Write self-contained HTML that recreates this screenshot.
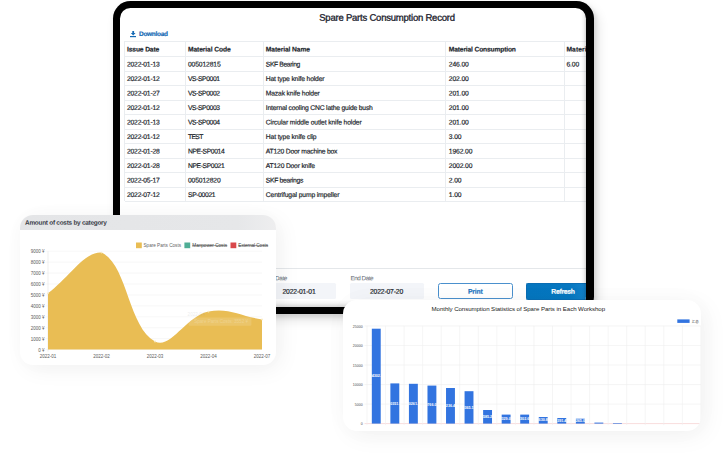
<!DOCTYPE html>
<html lang="en">
<head>
<meta charset="utf-8">
<title>Spare Parts Consumption Record</title>
<style>
html,body{margin:0;padding:0;}
body{width:723px;height:453px;background:#fff;position:relative;overflow:hidden;font-family:"Liberation Sans","Noto Sans CJK SC",sans-serif;color:#222;}
.abs{position:absolute;}
.t{position:absolute;white-space:nowrap;line-height:12px;height:12px;-webkit-text-stroke:0.18px currentColor;}
#tablet{left:112.5px;top:1.1px;width:481.5px;height:312.8px;background:#000;border-radius:17.5px;box-shadow:4px 6px 12px rgba(0,0,0,0.11), 2px 3px 5px rgba(0,0,0,0.11);}
#screen{left:7.3px;top:6.9px;width:466.7px;height:299px;background:#fff;border-radius:10.5px;overflow:hidden;}
#screen .inner{position:absolute;left:-119.8px;top:-8px;width:723px;height:453px;}
#sep{left:120px;top:268.4px;width:470px;height:0;border-top:0.7px solid #e4e7ea;}
.ns{-webkit-text-stroke:0 !important;}
.inp{height:16.5px;width:74px;background:#f3f5f9;border-radius:1.5px;}
.btn{height:14.6px;width:73.2px;border-radius:2px;}
#print{left:437.6px;top:282.9px;border:0.9px solid #4a90cd;border-radius:2.5px;background:#fff;}
#refresh{left:526px;top:283.1px;border:0.8px solid #0a6db3;background:linear-gradient(to right,#0576bf 0%,#0677c0 70%,#1483cc 100%);width:60px;border-right:0;border-radius:2px 0 0 2px;}
#rshade{left:580.5px;top:8px;width:6.5px;height:300px;background:linear-gradient(to right,rgba(0,0,0,0),rgba(0,0,0,0.05) 45%,rgba(0,0,0,0.22));}
#bshade{left:120px;top:300px;width:470px;height:7px;background:linear-gradient(to bottom,rgba(0,0,0,0),rgba(0,0,0,0.04) 45%,rgba(0,0,0,0.16));}
#lcard{left:20px;top:214.8px;width:256px;height:149.8px;background:#fff;border-radius:13px;box-shadow:5px 5px 22px rgba(0,0,0,0.05),0 0 26px rgba(0,0,0,0.015);overflow:hidden;}
#lcard .inner,#rcard .inner{position:absolute;width:723px;height:453px;}
#lcard .inner{left:-20px;top:-214.8px;}
#rcard .inner{left:-343px;top:-299.8px;}
#lhead{left:20px;top:214.8px;width:256px;height:15px;background:linear-gradient(to right,#e4e5e7 0%,#e6e7e9 85%,#eeeeef 100%);}
#rcard{left:343px;top:299.8px;width:358px;height:130.8px;background:#fff;border-radius:14px;box-shadow:5px 5px 24px rgba(0,0,0,0.05),0 0 30px rgba(0,0,0,0.02);overflow:hidden;}
svg{position:absolute;left:0;top:0;}
svg text{font-family:"Liberation Sans","Noto Sans CJK SC",sans-serif;}
.ax{font-size:4.5px;fill:#5a5a5a;}
.lg{font-size:4.7px;fill:#666;}
.lgs{fill:#444;}
.tt{font-size:4.6px;fill:#fff;}
.bx{font-size:3.5px;fill:#4a4a4a;}
.bl{font-size:3.7px;fill:#fff;font-weight:bold;}
.bt{font-size:6.1px;fill:#222;}
</style>
</head>
<body>
<div id="tablet" class="abs">
  <div id="screen" class="abs"><div class="inner">
    <svg class="abs" style="left:130.1px;top:31.3px" width="6.4" height="6.3" viewBox="0 0 64 61"><path d="M23 0h18v20h15L32 44 8 20h15z" fill="#176bb5"/><rect x="0" y="49" width="64" height="12" fill="#176bb5"/></svg>
<div class="abs" style="left:124.5px;top:41.15px;width:480px;height:0;border-top:0.7px solid #eaedf0"></div>
<div class="abs" style="left:124.5px;top:56.15px;width:480px;height:0;border-top:0.7px solid #eaedf0"></div>
<div class="abs" style="left:124.5px;top:70.65px;width:480px;height:0;border-top:0.7px solid #eaedf0"></div>
<div class="abs" style="left:124.5px;top:85.15px;width:480px;height:0;border-top:0.7px solid #eaedf0"></div>
<div class="abs" style="left:124.5px;top:99.65px;width:480px;height:0;border-top:0.7px solid #eaedf0"></div>
<div class="abs" style="left:124.5px;top:114.15px;width:480px;height:0;border-top:0.7px solid #eaedf0"></div>
<div class="abs" style="left:124.5px;top:128.65px;width:480px;height:0;border-top:0.7px solid #eaedf0"></div>
<div class="abs" style="left:124.5px;top:143.15px;width:480px;height:0;border-top:0.7px solid #eaedf0"></div>
<div class="abs" style="left:124.5px;top:157.65px;width:480px;height:0;border-top:0.7px solid #eaedf0"></div>
<div class="abs" style="left:124.5px;top:172.15px;width:480px;height:0;border-top:0.7px solid #eaedf0"></div>
<div class="abs" style="left:124.5px;top:186.65px;width:480px;height:0;border-top:0.7px solid #eaedf0"></div>
<div class="abs" style="left:124.5px;top:201.15px;width:480px;height:0;border-top:0.7px solid #eaedf0"></div>
<div class="abs" style="left:124.35px;top:41.5px;width:0;height:160.00px;border-left:0.7px solid #eaedf0"></div>
<div class="abs" style="left:185.25px;top:41.5px;width:0;height:160.00px;border-left:0.7px solid #eaedf0"></div>
<div class="abs" style="left:263.15px;top:41.5px;width:0;height:160.00px;border-left:0.7px solid #eaedf0"></div>
<div class="abs" style="left:445.25px;top:41.5px;width:0;height:160.00px;border-left:0.7px solid #eaedf0"></div>
<div class="abs" style="left:563.55px;top:41.5px;width:0;height:160.00px;border-left:0.7px solid #eaedf0"></div>
    <div id="sep" class="abs"></div>
    <div class="abs inp" style="left:262px;top:283px"></div>
    <div class="abs inp" style="left:349.5px;top:283px"></div>
    <div id="print" class="abs btn"></div>
    <div id="refresh" class="abs btn"></div>
<span class="t" style="left:319px;top:11px;transform:translate(0.20px,0.70px) rotate(0.03deg);font-size:9.5px;font-weight:normal;color:#1a202b;letter-spacing:-0.215px;-webkit-text-stroke-width:0.3px">Spare Parts Consumption Record</span>
<span class="t" style="left:139px;top:28px;transform:translate(0.00px,0.05px) rotate(0.03deg);font-size:6.5px;font-weight:bold;color:#176bb5;letter-spacing:-0.283px">Download</span>
<span class="t" style="left:127px;top:43px;transform:translate(0.00px,0.55px) rotate(0.03deg);font-size:6.7px;font-weight:bold;color:#20242a;letter-spacing:-0.137px">Issue Date</span>
<span class="t" style="left:188px;top:43px;transform:translate(0.00px,0.55px) rotate(0.03deg);font-size:6.7px;font-weight:bold;color:#20242a;letter-spacing:-0.097px">Material Code</span>
<span class="t" style="left:265px;top:43px;transform:translate(0.80px,0.55px) rotate(0.03deg);font-size:6.7px;font-weight:bold;color:#20242a;letter-spacing:-0.097px">Material Name</span>
<span class="t" style="left:448px;top:43px;transform:translate(0.80px,0.55px) rotate(0.03deg);font-size:6.7px;font-weight:bold;color:#20242a;letter-spacing:-0.162px">Material Consumption</span>
<span class="t" style="left:566px;top:43px;transform:translate(0.40px,0.55px) rotate(0.03deg);font-size:6.7px;font-weight:bold;color:#20242a;letter-spacing:0.105px">Material Unit</span>
<span class="t" style="left:127px;top:58px;transform:translate(0.00px,0.45px) rotate(0.03deg);font-size:6.75px;font-weight:normal;color:#20242a;letter-spacing:-0.193px">2022-01-13</span>
<span class="t" style="left:188px;top:58px;transform:translate(0.00px,0.45px) rotate(0.03deg);font-size:6.75px;font-weight:normal;color:#20242a;letter-spacing:-0.144px">005012815</span>
<span class="t" style="left:265px;top:58px;transform:translate(0.80px,0.45px) rotate(0.03deg);font-size:6.75px;font-weight:normal;color:#20242a;letter-spacing:-0.380px">SKF Bearing</span>
<span class="t" style="left:448px;top:58px;transform:translate(0.80px,0.45px) rotate(0.03deg);font-size:6.75px;font-weight:normal;color:#20242a;letter-spacing:-0.126px">246.00</span>
<span class="t" style="left:566px;top:58px;transform:translate(0.40px,0.45px) rotate(0.03deg);font-size:6.75px;font-weight:normal;color:#20242a;letter-spacing:-0.135px">6.00</span>
<span class="t" style="left:127px;top:72px;transform:translate(0.00px,0.95px) rotate(0.03deg);font-size:6.75px;font-weight:normal;color:#20242a;letter-spacing:-0.193px">2022-01-12</span>
<span class="t" style="left:188px;top:72px;transform:translate(0.00px,0.95px) rotate(0.03deg);font-size:6.75px;font-weight:normal;color:#20242a;letter-spacing:-0.409px">VS-SP0001</span>
<span class="t" style="left:265px;top:72px;transform:translate(0.80px,0.95px) rotate(0.03deg);font-size:6.75px;font-weight:normal;color:#20242a;letter-spacing:-0.158px">Hat type knife holder</span>
<span class="t" style="left:448px;top:72px;transform:translate(0.80px,0.95px) rotate(0.03deg);font-size:6.75px;font-weight:normal;color:#20242a;letter-spacing:-0.126px">202.00</span>
<span class="t" style="left:127px;top:87px;transform:translate(0.00px,0.45px) rotate(0.03deg);font-size:6.75px;font-weight:normal;color:#20242a;letter-spacing:-0.193px">2022-01-27</span>
<span class="t" style="left:188px;top:87px;transform:translate(0.00px,0.45px) rotate(0.03deg);font-size:6.75px;font-weight:normal;color:#20242a;letter-spacing:-0.409px">VS-SP0002</span>
<span class="t" style="left:265px;top:87px;transform:translate(0.80px,0.45px) rotate(0.03deg);font-size:6.75px;font-weight:normal;color:#20242a;letter-spacing:-0.159px">Mazak knife holder</span>
<span class="t" style="left:448px;top:87px;transform:translate(0.80px,0.45px) rotate(0.03deg);font-size:6.75px;font-weight:normal;color:#20242a;letter-spacing:-0.126px">201.00</span>
<span class="t" style="left:127px;top:101px;transform:translate(0.00px,0.95px) rotate(0.03deg);font-size:6.75px;font-weight:normal;color:#20242a;letter-spacing:-0.193px">2022-01-12</span>
<span class="t" style="left:188px;top:101px;transform:translate(0.00px,0.95px) rotate(0.03deg);font-size:6.75px;font-weight:normal;color:#20242a;letter-spacing:-0.409px">VS-SP0003</span>
<span class="t" style="left:265px;top:101px;transform:translate(0.80px,0.95px) rotate(0.03deg);font-size:6.75px;font-weight:normal;color:#20242a;letter-spacing:-0.184px">Internal cooling CNC lathe guide bush</span>
<span class="t" style="left:448px;top:101px;transform:translate(0.80px,0.95px) rotate(0.03deg);font-size:6.75px;font-weight:normal;color:#20242a;letter-spacing:-0.126px">201.00</span>
<span class="t" style="left:127px;top:116px;transform:translate(0.00px,0.45px) rotate(0.03deg);font-size:6.75px;font-weight:normal;color:#20242a;letter-spacing:-0.193px">2022-01-13</span>
<span class="t" style="left:188px;top:116px;transform:translate(0.00px,0.45px) rotate(0.03deg);font-size:6.75px;font-weight:normal;color:#20242a;letter-spacing:-0.409px">VS-SP0004</span>
<span class="t" style="left:265px;top:116px;transform:translate(0.80px,0.45px) rotate(0.03deg);font-size:6.75px;font-weight:normal;color:#20242a;letter-spacing:-0.125px">Circular middle outlet knife holder</span>
<span class="t" style="left:448px;top:116px;transform:translate(0.80px,0.45px) rotate(0.03deg);font-size:6.75px;font-weight:normal;color:#20242a;letter-spacing:-0.126px">201.00</span>
<span class="t" style="left:127px;top:130px;transform:translate(0.00px,0.95px) rotate(0.03deg);font-size:6.75px;font-weight:normal;color:#20242a;letter-spacing:-0.193px">2022-01-12</span>
<span class="t" style="left:188px;top:130px;transform:translate(0.00px,0.95px) rotate(0.03deg);font-size:6.75px;font-weight:normal;color:#20242a;letter-spacing:-0.666px">TEST</span>
<span class="t" style="left:265px;top:130px;transform:translate(0.80px,0.95px) rotate(0.03deg);font-size:6.75px;font-weight:normal;color:#20242a;letter-spacing:-0.136px">Hat type knife clip</span>
<span class="t" style="left:448px;top:130px;transform:translate(0.80px,0.95px) rotate(0.03deg);font-size:6.75px;font-weight:normal;color:#20242a;letter-spacing:-0.135px">3.00</span>
<span class="t" style="left:127px;top:145px;transform:translate(0.00px,0.45px) rotate(0.03deg);font-size:6.75px;font-weight:normal;color:#20242a;letter-spacing:-0.193px">2022-01-28</span>
<span class="t" style="left:188px;top:145px;transform:translate(0.00px,0.45px) rotate(0.03deg);font-size:6.75px;font-weight:normal;color:#20242a;letter-spacing:-0.386px">NPE-SP0014</span>
<span class="t" style="left:265px;top:145px;transform:translate(0.80px,0.45px) rotate(0.03deg);font-size:6.75px;font-weight:normal;color:#20242a;letter-spacing:-0.207px">AT120 Door machine box</span>
<span class="t" style="left:448px;top:145px;transform:translate(0.80px,0.45px) rotate(0.03deg);font-size:6.75px;font-weight:normal;color:#20242a;letter-spacing:-0.129px">1962.00</span>
<span class="t" style="left:127px;top:159px;transform:translate(0.00px,0.95px) rotate(0.03deg);font-size:6.75px;font-weight:normal;color:#20242a;letter-spacing:-0.193px">2022-01-28</span>
<span class="t" style="left:188px;top:159px;transform:translate(0.00px,0.95px) rotate(0.03deg);font-size:6.75px;font-weight:normal;color:#20242a;letter-spacing:-0.386px">NPE-SP0021</span>
<span class="t" style="left:265px;top:159px;transform:translate(0.80px,0.95px) rotate(0.03deg);font-size:6.75px;font-weight:normal;color:#20242a;letter-spacing:-0.196px">AT120 Door knife</span>
<span class="t" style="left:448px;top:159px;transform:translate(0.80px,0.95px) rotate(0.03deg);font-size:6.75px;font-weight:normal;color:#20242a;letter-spacing:-0.129px">2002.00</span>
<span class="t" style="left:127px;top:174px;transform:translate(0.00px,0.45px) rotate(0.03deg);font-size:6.75px;font-weight:normal;color:#20242a;letter-spacing:-0.193px">2022-05-17</span>
<span class="t" style="left:188px;top:174px;transform:translate(0.00px,0.45px) rotate(0.03deg);font-size:6.75px;font-weight:normal;color:#20242a;letter-spacing:-0.144px">005012820</span>
<span class="t" style="left:265px;top:174px;transform:translate(0.80px,0.45px) rotate(0.03deg);font-size:6.75px;font-weight:normal;color:#20242a;letter-spacing:-0.309px">SKF bearings</span>
<span class="t" style="left:448px;top:174px;transform:translate(0.80px,0.45px) rotate(0.03deg);font-size:6.75px;font-weight:normal;color:#20242a;letter-spacing:-0.135px">2.00</span>
<span class="t" style="left:127px;top:188px;transform:translate(0.00px,0.95px) rotate(0.03deg);font-size:6.75px;font-weight:normal;color:#20242a;letter-spacing:-0.193px">2022-07-12</span>
<span class="t" style="left:188px;top:188px;transform:translate(0.00px,0.95px) rotate(0.03deg);font-size:6.75px;font-weight:normal;color:#20242a;letter-spacing:-0.354px">SP-00021</span>
<span class="t" style="left:265px;top:188px;transform:translate(0.80px,0.95px) rotate(0.03deg);font-size:6.75px;font-weight:normal;color:#20242a;letter-spacing:-0.137px">Centrifugal pump impeller</span>
<span class="t" style="left:448px;top:188px;transform:translate(0.80px,0.95px) rotate(0.03deg);font-size:6.75px;font-weight:normal;color:#20242a;letter-spacing:-0.135px">1.00</span>
<span class="t" style="left:261px;top:272px;transform:translate(0.60px,0.25px) rotate(0.03deg);font-size:6.3px;font-weight:normal;color:#6c727a;letter-spacing:-0.286px;-webkit-text-stroke-width:0.05px">Start Date</span>
<span class="t" style="left:350px;top:272px;transform:translate(0.50px,0.25px) rotate(0.03deg);font-size:6.3px;font-weight:normal;color:#6c727a;letter-spacing:-0.458px;-webkit-text-stroke-width:0.05px">End Date</span>
<span class="t" style="left:282px;top:285px;transform:translate(0.50px,0.85px) rotate(0.03deg);font-size:6.8px;font-weight:normal;color:#20242a;letter-spacing:-0.178px">2022-01-01</span>
<span class="t" style="left:370px;top:285px;transform:translate(0.00px,0.85px) rotate(0.03deg);font-size:6.8px;font-weight:normal;color:#20242a;letter-spacing:-0.178px">2022-07-20</span>
<span class="t" style="left:467px;top:285px;transform:translate(0.90px,0.65px) rotate(0.03deg);font-size:6.8px;font-weight:bold;color:#1b73c1;letter-spacing:-0.177px">Print</span>
<span class="t" style="left:551px;top:285px;transform:translate(0.25px,0.65px) rotate(0.03deg);font-size:6.8px;font-weight:bold;color:#ffffff;letter-spacing:-0.259px">Refresh</span>
    <div id="bshade" class="abs"></div>
    <div id="rshade" class="abs"></div>
  </div></div>
</div>
<div id="lcard" class="abs"><div class="inner">
  <div id="lhead" class="abs"></div>
  <span class="t ns" style="left:25px;top:216px;transform:translate(0.00px,0.75px) rotate(0.03deg);font-size:6.45px;font-weight:bold;color:#3a4049;letter-spacing:-0.260px">Amount of costs by category</span>
  <svg width="723" height="453" viewBox="0 0 723 453">
<line x1="45.5" y1="349.60" x2="262.0" y2="349.60" stroke="#f2f2f2" stroke-width="0.6"/>
<text x="44.6" y="351.60" text-anchor="end" class="ax">0 ¥</text>
<line x1="45.5" y1="338.67" x2="262.0" y2="338.67" stroke="#f2f2f2" stroke-width="0.6"/>
<text x="44.6" y="340.67" text-anchor="end" class="ax">1000 ¥</text>
<line x1="45.5" y1="327.74" x2="262.0" y2="327.74" stroke="#f2f2f2" stroke-width="0.6"/>
<text x="44.6" y="329.74" text-anchor="end" class="ax">2000 ¥</text>
<line x1="45.5" y1="316.81" x2="262.0" y2="316.81" stroke="#f2f2f2" stroke-width="0.6"/>
<text x="44.6" y="318.81" text-anchor="end" class="ax">3000 ¥</text>
<line x1="45.5" y1="305.88" x2="262.0" y2="305.88" stroke="#f2f2f2" stroke-width="0.6"/>
<text x="44.6" y="307.88" text-anchor="end" class="ax">4000 ¥</text>
<line x1="45.5" y1="294.95" x2="262.0" y2="294.95" stroke="#f2f2f2" stroke-width="0.6"/>
<text x="44.6" y="296.95" text-anchor="end" class="ax">5000 ¥</text>
<line x1="45.5" y1="284.02" x2="262.0" y2="284.02" stroke="#f2f2f2" stroke-width="0.6"/>
<text x="44.6" y="286.02" text-anchor="end" class="ax">6000 ¥</text>
<line x1="45.5" y1="273.09" x2="262.0" y2="273.09" stroke="#f2f2f2" stroke-width="0.6"/>
<text x="44.6" y="275.09" text-anchor="end" class="ax">7000 ¥</text>
<line x1="45.5" y1="262.16" x2="262.0" y2="262.16" stroke="#f2f2f2" stroke-width="0.6"/>
<text x="44.6" y="264.16" text-anchor="end" class="ax">8000 ¥</text>
<line x1="45.5" y1="251.23" x2="262.0" y2="251.23" stroke="#f2f2f2" stroke-width="0.6"/>
<text x="44.6" y="253.23" text-anchor="end" class="ax">9000 ¥</text>
<line x1="48" y1="251.23" x2="48" y2="351.60" stroke="#e4e4e4" stroke-width="0.6"/>
<path d="M48.00,293.31 C69.40,277.00 84.67,251.23 101.50,252.54 C127.47,264.24 128.09,326.67 155.00,341.51 C170.89,349.60 185.76,316.26 208.50,311.56 C228.56,307.42 240.60,316.29 262.00,319.43 L262.00,349.60 L48.00,349.60 Z" fill="#e9bd54"/>
<circle cx="48.00" cy="293.31" r="0.9" fill="#f8e9c0"/>
<circle cx="101.50" cy="252.54" r="0.9" fill="#f8e9c0"/>
<circle cx="155.00" cy="341.51" r="0.9" fill="#f8e9c0"/>
<circle cx="208.50" cy="311.56" r="0.9" fill="#f8e9c0"/>
<circle cx="262.00" cy="319.43" r="0.9" fill="#f8e9c0"/>
<text x="48.00" y="357.9" text-anchor="middle" class="ax">2022-01</text>
<text x="101.50" y="357.9" text-anchor="middle" class="ax">2022-02</text>
<text x="155.00" y="357.9" text-anchor="middle" class="ax">2022-03</text>
<text x="208.50" y="357.9" text-anchor="middle" class="ax">2022-04</text>
<text x="262.00" y="357.9" text-anchor="middle" class="ax">2022-07</text>
<rect x="136" y="242.5" width="5.8" height="5.7" fill="#e9bd54"/>
<text x="143.5" y="247.2" class="lg" textLength="37.5">Spare Parts Costs</text>
<rect x="184.4" y="242.5" width="5.8" height="5.7" fill="#4fae96"/>
<text x="192.3" y="247.2" class="lg lgs" textLength="34.7">Manpower Costs</text>
<line x1="192.3" y1="245.6" x2="227.3" y2="245.6" stroke="#444" stroke-width="0.55"/>
<rect x="230.5" y="242.5" width="5.8" height="5.7" fill="#d9484b"/>
<text x="238.3" y="247.2" class="lg lgs" textLength="29.7">External Costs</text>
<line x1="238.3" y1="245.6" x2="268.2" y2="245.6" stroke="#444" stroke-width="0.55"/>
<rect x="188.6" y="317.6" width="62.8" height="8.2" rx="1" fill="#ffffff" opacity="0.13"/>
<text x="194.2" y="323.3" class="tt" opacity="0.22">Spare Parts Costs: 3552 ¥</text>
<text x="187.6" y="315.6" class="tt" opacity="0.18" style="fill:#999">2022-04</text>
  </svg>
</div></div>
<div id="rcard" class="abs"><div class="inner">
  <svg width="723" height="453" viewBox="0 0 723 453">
<line x1="364.5" y1="423.60" x2="701" y2="423.60" stroke="#f3c4c4" stroke-width="0.6"/>
<text x="362.6" y="425.20" text-anchor="end" class="bx">0</text>
<line x1="364.5" y1="404.07" x2="701" y2="404.07" stroke="#efefef" stroke-width="0.6"/>
<text x="362.6" y="405.67" text-anchor="end" class="bx">5000</text>
<line x1="364.5" y1="384.54" x2="701" y2="384.54" stroke="#efefef" stroke-width="0.6"/>
<text x="362.6" y="386.14" text-anchor="end" class="bx">10000</text>
<line x1="364.5" y1="365.01" x2="701" y2="365.01" stroke="#efefef" stroke-width="0.6"/>
<text x="362.6" y="366.61" text-anchor="end" class="bx">15000</text>
<line x1="364.5" y1="345.48" x2="701" y2="345.48" stroke="#efefef" stroke-width="0.6"/>
<text x="362.6" y="347.08" text-anchor="end" class="bx">20000</text>
<line x1="364.5" y1="325.95" x2="701" y2="325.95" stroke="#efefef" stroke-width="0.6"/>
<text x="362.6" y="327.55" text-anchor="end" class="bx">25000</text>
<line x1="367.00" y1="325.95" x2="367.00" y2="425.10" stroke="#efefef" stroke-width="0.6"/>
<line x1="385.55" y1="325.95" x2="385.55" y2="425.10" stroke="#efefef" stroke-width="0.6"/>
<line x1="404.10" y1="325.95" x2="404.10" y2="425.10" stroke="#efefef" stroke-width="0.6"/>
<line x1="422.65" y1="325.95" x2="422.65" y2="425.10" stroke="#efefef" stroke-width="0.6"/>
<line x1="441.20" y1="325.95" x2="441.20" y2="425.10" stroke="#efefef" stroke-width="0.6"/>
<line x1="459.75" y1="325.95" x2="459.75" y2="425.10" stroke="#efefef" stroke-width="0.6"/>
<line x1="478.30" y1="325.95" x2="478.30" y2="425.10" stroke="#efefef" stroke-width="0.6"/>
<line x1="496.85" y1="325.95" x2="496.85" y2="425.10" stroke="#efefef" stroke-width="0.6"/>
<line x1="515.40" y1="325.95" x2="515.40" y2="425.10" stroke="#efefef" stroke-width="0.6"/>
<line x1="533.95" y1="325.95" x2="533.95" y2="425.10" stroke="#efefef" stroke-width="0.6"/>
<line x1="552.50" y1="325.95" x2="552.50" y2="425.10" stroke="#efefef" stroke-width="0.6"/>
<line x1="571.05" y1="325.95" x2="571.05" y2="425.10" stroke="#efefef" stroke-width="0.6"/>
<line x1="589.60" y1="325.95" x2="589.60" y2="425.10" stroke="#efefef" stroke-width="0.6"/>
<line x1="608.15" y1="325.95" x2="608.15" y2="425.10" stroke="#efefef" stroke-width="0.6"/>
<line x1="626.70" y1="325.95" x2="626.70" y2="425.10" stroke="#efefef" stroke-width="0.6"/>
<line x1="645.25" y1="325.95" x2="645.25" y2="425.10" stroke="#efefef" stroke-width="0.6"/>
<line x1="663.80" y1="325.95" x2="663.80" y2="425.10" stroke="#efefef" stroke-width="0.6"/>
<line x1="682.35" y1="325.95" x2="682.35" y2="425.10" stroke="#efefef" stroke-width="0.6"/>
<line x1="700.90" y1="325.95" x2="700.90" y2="425.10" stroke="#efefef" stroke-width="0.6"/>
<rect x="371.82" y="328.70" width="8.90" height="94.90" fill="#3274e0"/>
<text x="376.27" y="377.25" text-anchor="middle" class="bl">24302.7</text>
<rect x="390.38" y="383.40" width="8.90" height="40.20" fill="#3274e0"/>
<text x="394.82" y="404.60" text-anchor="middle" class="bl">10351.5</text>
<rect x="408.93" y="383.80" width="8.90" height="39.80" fill="#3274e0"/>
<text x="413.38" y="404.80" text-anchor="middle" class="bl">10261.2</text>
<rect x="427.48" y="385.60" width="8.90" height="38.00" fill="#3274e0"/>
<text x="431.93" y="405.70" text-anchor="middle" class="bl">9766.05</text>
<rect x="446.03" y="388.00" width="8.90" height="35.60" fill="#3274e0"/>
<text x="450.48" y="406.90" text-anchor="middle" class="bl">9236.45</text>
<rect x="464.57" y="391.20" width="8.90" height="32.40" fill="#3274e0"/>
<text x="469.02" y="408.50" text-anchor="middle" class="bl">8365.15</text>
<rect x="483.12" y="410.00" width="8.90" height="13.60" fill="#3274e0"/>
<text x="487.57" y="417.90" text-anchor="middle" class="bl">3585.25</text>
<rect x="501.68" y="414.60" width="8.90" height="9.00" fill="#3274e0"/>
<text x="506.12" y="420.20" text-anchor="middle" class="bl">2329.05</text>
<rect x="520.22" y="414.60" width="8.90" height="9.00" fill="#3274e0"/>
<text x="524.67" y="420.20" text-anchor="middle" class="bl">2302.65</text>
<rect x="538.77" y="417.00" width="8.90" height="6.60" fill="#3274e0"/>
<text x="543.23" y="421.40" text-anchor="middle" class="bl">1630.85</text>
<rect x="557.32" y="418.00" width="8.90" height="5.60" fill="#3274e0"/>
<text x="561.77" y="421.90" text-anchor="middle" class="bl">1391.45</text>
<rect x="575.88" y="418.70" width="8.90" height="4.90" fill="#3274e0"/>
<text x="580.33" y="422.25" text-anchor="middle" class="bl">1265.05</text>
<rect x="594.42" y="422.60" width="8.90" height="1.00" fill="#3274e0"/>
<rect x="612.97" y="423.00" width="8.90" height="0.60" fill="#3274e0"/>
<rect x="677.3" y="319.4" width="12.3" height="3.5" fill="#3274e0"/>
<text x="691.7" y="322.5" class="bx" style="font-size:3.6px">汇总</text>
<text x="518.3" y="311.4" text-anchor="middle" class="bt" textLength="173.5">Monthly Consumption Statistics of Spare Parts in Each Workshop</text>
  </svg>
</div></div>
</body>
</html>
